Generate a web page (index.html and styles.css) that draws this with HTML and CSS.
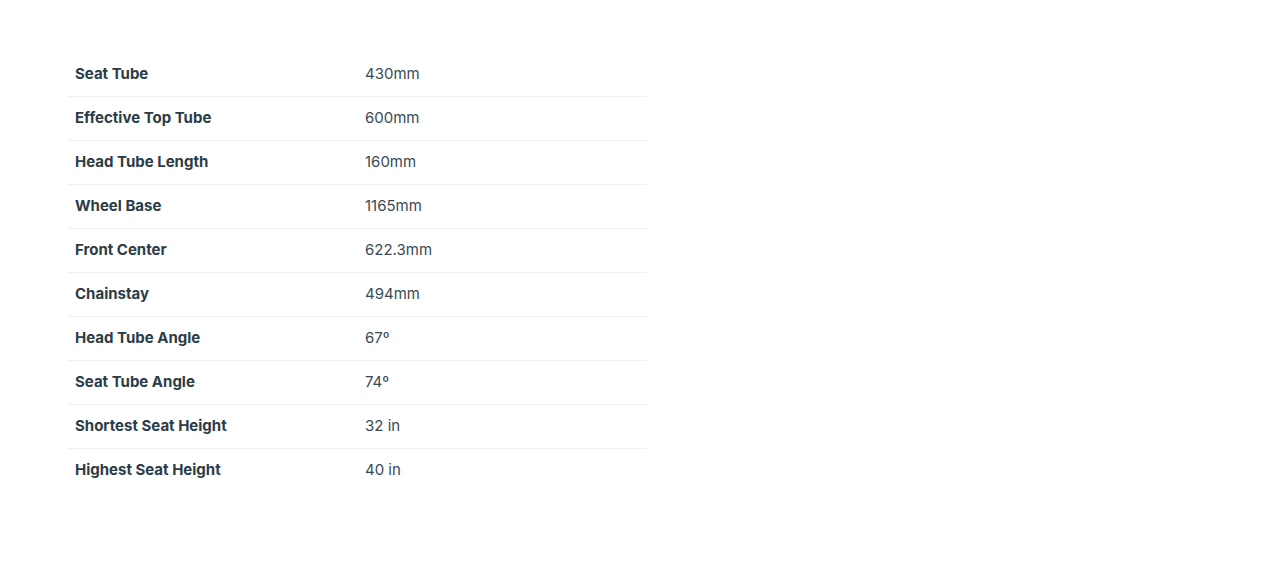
FILE: index.html
```html
<!DOCTYPE html>
<html>
<head>
<meta charset="utf-8">
<link rel="stylesheet" href="styles.css">
</head>
<body>
<div class="page">
  <table class="specs">
    <tbody>
      <tr><th>Seat Tube</th><td>430mm</td></tr>
      <tr><th>Effective Top Tube</th><td>600mm</td></tr>
      <tr><th>Head Tube Length</th><td>160mm</td></tr>
      <tr><th>Wheel Base</th><td>1165mm</td></tr>
      <tr><th>Front Center</th><td>622.3mm</td></tr>
      <tr><th>Chainstay</th><td>494mm</td></tr>
      <tr><th>Head Tube Angle</th><td>67º</td></tr>
      <tr><th>Seat Tube Angle</th><td>74º</td></tr>
      <tr><th>Shortest Seat Height</th><td>32 in</td></tr>
      <tr><th>Highest Seat Height</th><td>40 in</td></tr>
    </tbody>
  </table>
</div>
</body>
</html>
```
FILE: styles.css
```css
html, body {
  margin: 0;
  padding: 0;
  background: #ffffff;
}
.page {
  padding: 52px 0 0 68px;
}
.specs {
  border-collapse: collapse;
  width: 579px;
  font-family: "Inter", sans-serif;
  font-size: 15px;
  color: #2b3c47;
}
.specs tr {
  height: 44px;
  border-bottom: 1px solid #efefef;
}
.specs tr:last-child {
  border-bottom: none;
}
.specs th,
.specs td {
  padding: 0 7px 2px;
}
.specs tr:first-child th,
.specs tr:first-child td {
  padding: 0 7px;
}
.specs th {
  width: 276px;
  text-align: left;
  font-weight: 700;
}
.specs td {
  font-weight: 400;
  color: #3a4a54;
}
```
